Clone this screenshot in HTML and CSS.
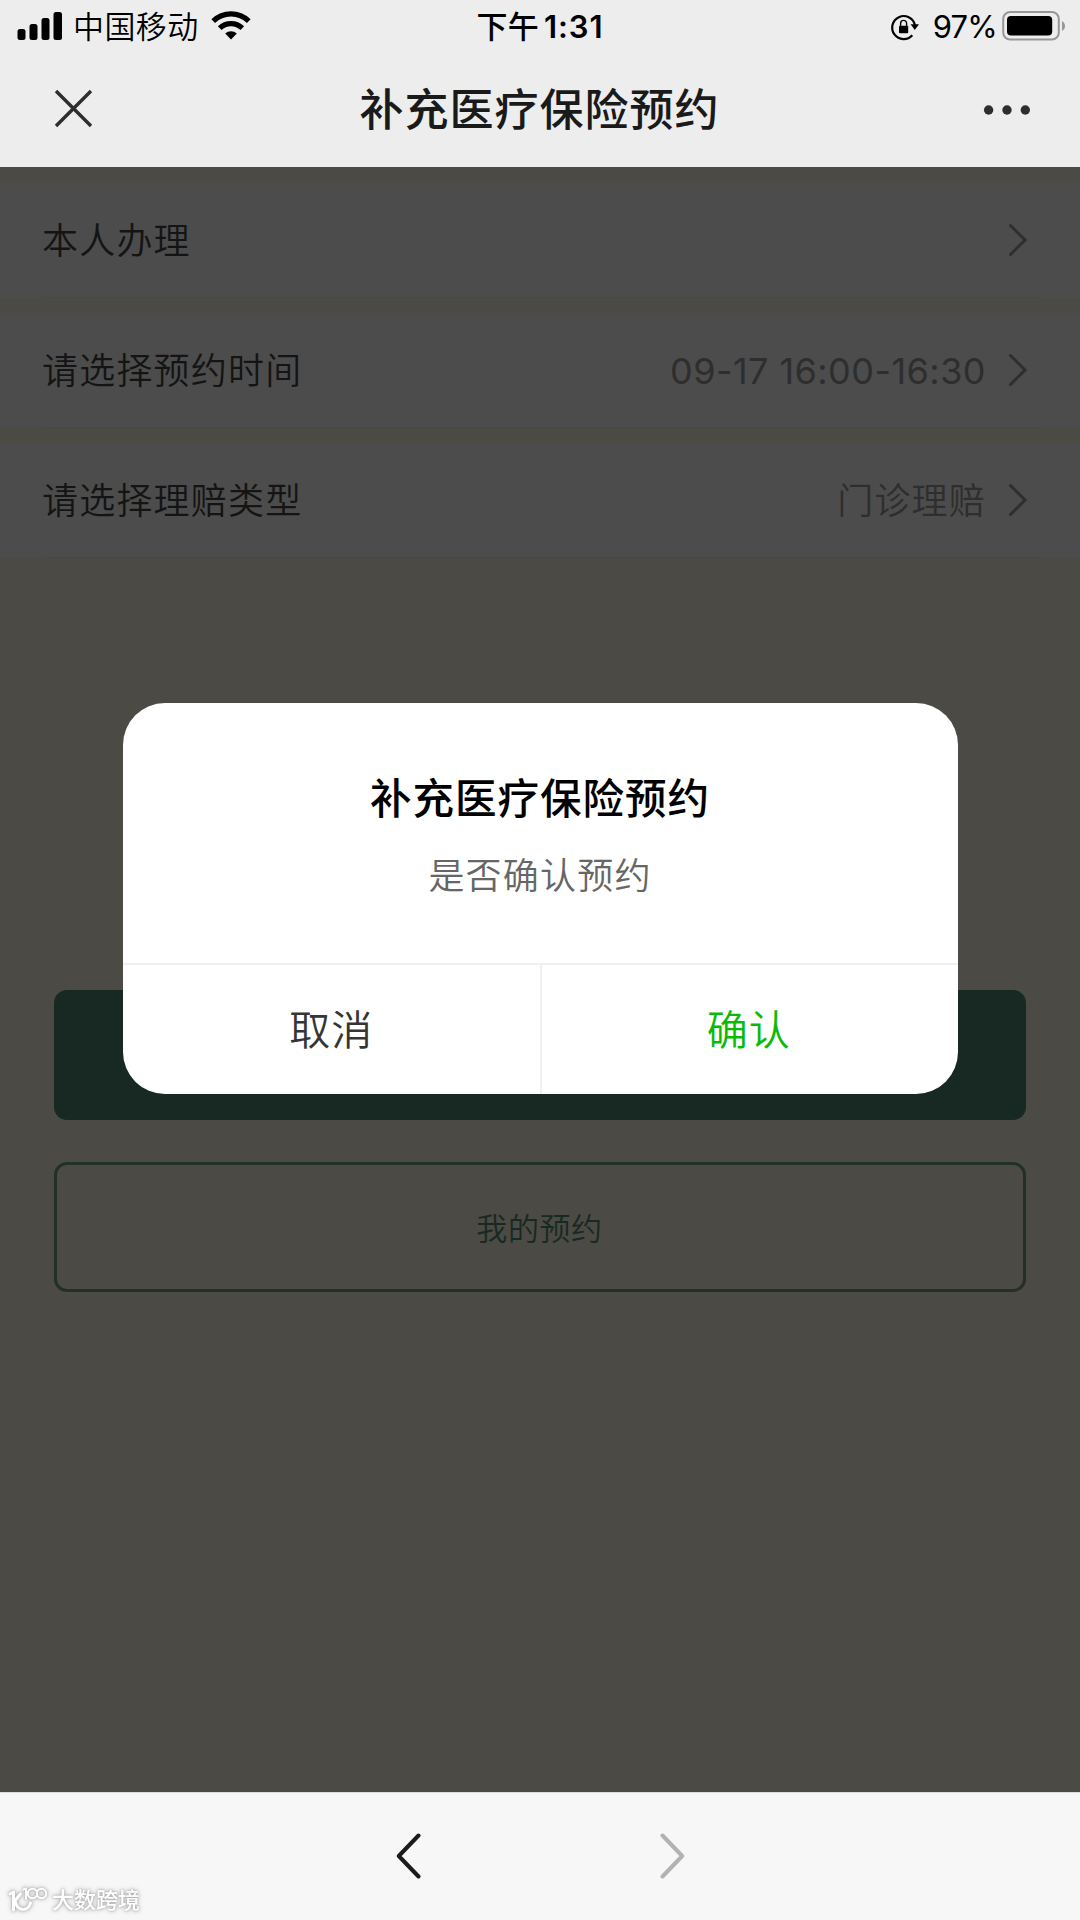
FILE: index.html
```html
<!DOCTYPE html>
<html lang="zh-CN">
<head>
<meta charset="utf-8">
<title>补充医疗保险预约</title>
<link rel="stylesheet" href="styles.css">
</head>
<body>
<div class="screen">
  <header class="top">
    <div class="status">
      <div class="status-left">
        <svg class="signal" width="46" height="30" viewBox="0 0 46 30">
          <rect x="0.5" y="18" width="8" height="11" rx="2.5"/>
          <rect x="12.5" y="13" width="8" height="16" rx="2.5"/>
          <rect x="24.5" y="7" width="8" height="22" rx="2.5"/>
          <rect x="36.5" y="1" width="8.5" height="28" rx="2.5"/>
        </svg>
        <span class="carrier">中国移动</span>
        <svg class="wifi" width="40" height="30" viewBox="0 0 40 30">
          <g fill="none" stroke="#000" stroke-width="5.2">
            <path d="M2.2 11.2A25.5 25.5 0 0 1 37.8 11.2"/>
            <path d="M8.7 18.2A16 16 0 0 1 31.3 18.2"/>
          </g>
          <path d="M20 29.5 L14.2 23.6 A8.3 8.3 0 0 1 25.8 23.6 Z"/>
        </svg>
      </div>
      <div class="clock"><span>下午</span><span class="clock-num">1:31</span></div>
      <div class="status-right">
        <svg class="lock" width="30" height="30" viewBox="0 0 30 30">
          <path d="M22.3 23.2A11.5 11.5 0 1 1 24.9 13" fill="none" stroke="#000" stroke-width="2.2"/>
          <path d="M20.6 12.2H29L24.8 18Z"/>
          <rect x="9" y="13.7" width="9.2" height="7.6" rx="1"/>
          <path d="M10.6 14.2V11.4A3 3 0 0 1 16.6 11.4V14.2" fill="none" stroke="#000" stroke-width="1.4"/>
        </svg>
        <span class="percent">97%</span>
        <svg class="battery" width="65" height="32" viewBox="0 0 65 32">
          <rect x="1.2" y="2" width="55.6" height="27.6" rx="7" fill="none" stroke="#979797" stroke-width="2"/>
          <rect x="5" y="6" width="45.2" height="19.6" rx="4"/>
          <path d="M60 11V21C62 20 63 18 63 16S62 12 60 11Z" fill="#979797"/>
        </svg>
      </div>
    </div>
    <nav class="nav">
      <svg class="close" width="40" height="40" viewBox="0 0 40 40"><path d="M2 2L37 37M37 2L2 37" stroke="#2e2e2e" stroke-width="3.4"/></svg>
      <h1 class="nav-title">补充医疗保险预约</h1>
      <svg class="more" width="48" height="12" viewBox="0 0 48 12" fill="#2e2e2e"><circle cx="5.6" cy="6" r="4.7"/><circle cx="24" cy="6" r="4.7"/><circle cx="42.3" cy="6" r="4.7"/></svg>
    </nav>
  </header>

  <main class="page">
    <section class="cell">
      <div class="cell-body">
        <span class="label">本人办理</span>
        <svg class="chevron" width="20" height="34" viewBox="0 0 20 34"><path d="M2.5 2.5L17 17L2.5 31.5"/></svg>
      </div>
    </section>
    <section class="cell">
      <div class="cell-body">
        <span class="label">请选择预约时间</span>
        <span class="value value-num">09-17 16:00-16:30</span>
        <svg class="chevron" width="20" height="34" viewBox="0 0 20 34"><path d="M2.5 2.5L17 17L2.5 31.5"/></svg>
      </div>
    </section>
    <section class="cell">
      <div class="cell-body">
        <span class="label">请选择理赔类型</span>
        <span class="value">门诊理赔</span>
        <svg class="chevron" width="20" height="34" viewBox="0 0 20 34"><path d="M2.5 2.5L17 17L2.5 31.5"/></svg>
      </div>
    </section>
    <div class="actions">
      <div class="btn btn-solid"></div>
      <div class="btn btn-outline">我的预约</div>
    </div>
    <div class="dialog">
      <div class="dialog-main">
        <h2 class="dialog-title">补充医疗保险预约</h2>
        <p class="dialog-text">是否确认预约</p>
      </div>
      <div class="dialog-foot">
        <div class="choice">取消</div>
        <div class="choice choice-ok">确认</div>
      </div>
    </div>
  </main>

  <footer class="toolbar">
    <svg width="26" height="46" viewBox="0 0 26 46"><path d="M22.5 2.5L2.8 23L22.5 43.5" stroke="#1b1b1b"/></svg>
    <svg width="26" height="46" viewBox="0 0 26 46"><path d="M3.5 2.5L23.2 23L3.5 43.5" stroke="#b2b2b2"/></svg>
    <div class="mark">
      <svg width="40" height="28" viewBox="0 0 40 28" fill="none" stroke="#fff" stroke-width="3">
        <path d="M2 8L5.5 6V24"/><path d="M12.500 8L7 14.500C9 26 20 26 22.500 17"/>
        <path d="M15.5 3.5L18 2.5V13" stroke-width="2"/><circle cx="24.5" cy="7.5" r="4.7" stroke-width="2"/><circle cx="33.5" cy="7.5" r="4.7" stroke-width="2"/>
      </svg>
      <span>大数跨境</span>
    </div>
  </footer>
</div>
</body>
</html>
```
FILE: styles.css
```css
* { box-sizing: border-box; }
body {
  margin: 0;
  font-family: Inter, "Noto Sans CJK SC", sans-serif;
  font-weight: 350;
  color: #000;
}
h1, h2, p { margin: 0; }
svg { display: block; flex: none; }
.screen {
  width: 1080px;
  height: 1920px;
  display: flex;
  flex-direction: column;
  overflow: hidden;
}
.top { height: 167px; background: #ededed; }
.status {
  height: 54px;
  padding: 0 13px 0 17px;
  display: grid;
  grid-template-columns: 1fr auto 1fr;
  align-items: center;
  font-size: 31px;
  line-height: 54px;
}
.status-left, .status-right, .clock { display: flex; align-items: center; }
.signal { margin-top: -2px; }
.carrier { margin-left: 10px; letter-spacing: 0.4px; }
.wifi { margin: -4px 0 0 12px; }
.clock { margin-right: 4px; font-weight: 500; gap: 5px; letter-spacing: 0.3px; }
.clock-num { font-weight: 600; letter-spacing: 0.9px; }
.status-right { justify-content: flex-end; }
.lock { margin-right: 13px; }
.percent { letter-spacing: -0.8px; font-weight: 400; }
.battery { margin-left: 5px; margin-top: -3px; }
.nav {
  height: 113px;
  padding: 0 49px 0 54px;
  display: grid;
  grid-template-columns: 48px 1fr 48px;
  align-items: center;
}
.close { margin-top: -3px; }
.more { margin-top: -2px; }
.nav-title {
  margin: -7px 6px 0 0;
  font-size: 44px;
  font-weight: 500;
  letter-spacing: 1px;
  text-align: center;
  color: #1a1a1a;
}
.page {
  position: relative;
  height: 1625px;
  padding-top: 16px;
  background: #4c4a45;
  display: flex;
  flex-direction: column;
  gap: 15px;
}
.cell { height: 115px; padding: 0 38px 0 42px; background: #4c4c4c; }
.cell-body {
  height: 115px;
  padding: 0 14px 0 0;
  border-bottom: 1px solid #484848;
  display: flex;
  align-items: center;
}
.label { flex: 1; margin-top: -4px; font-size: 36px; letter-spacing: 1.2px; color: #141414; }
.value { margin-top: -4px; font-size: 36px; letter-spacing: 1.2px; color: #2e2e2e; }
.value-num { margin-top: 1px; letter-spacing: 0.45px; font-weight: 400; }
.chevron { margin: 0 0 0 22px; fill: none; stroke: #2e2e2e; stroke-width: 3; stroke-linecap: round; }
.actions {
  margin-top: 417px;
  padding: 0 54px;
  display: flex;
  flex-direction: column;
  gap: 42px;
}
.btn {
  height: 130px;
  border-radius: 13px;
  display: flex;
  align-items: center;
  justify-content: center;
  font-size: 31px;
}
.btn-solid { background: #182923; }
.btn-outline { padding: 0 1px 2px 0; border: 3px solid #233029; color: #182923; letter-spacing: 0.6px; }
.dialog {
  position: absolute;
  left: 122.5px;
  top: 535.5px;
  width: 835px;
  height: 391px;
  border-radius: 42px;
  background: #fff;
  overflow: hidden;
  display: flex;
  flex-direction: column;
}
.dialog-main { height: 260px; padding-top: 66px; text-align: center; }
.dialog-title { font-size: 41.5px; line-height: 60px; font-weight: 500; letter-spacing: 1px; }
.dialog-text { margin-top: 21px; font-size: 36px; line-height: 52px; letter-spacing: 1.2px; color: #666; }
.dialog-foot { display: grid; grid-template-columns: 417.5px 1fr; height: 131px; border-top: 2px solid #f0f0f0; }
.choice {
  padding-bottom: 4px;
  display: flex;
  align-items: center;
  justify-content: center;
  font-size: 41px;
  letter-spacing: 1px;
  color: #353535;
}
.choice-ok { padding-right: 2px; border-left: 2px solid #f0f0f0; color: #09bb07; }
.toolbar {
  position: relative;
  height: 128px;
  padding-bottom: 2px;
  background: #f7f7f7;
  border-top: 1px solid #dcdcdc;
  display: flex;
  align-items: center;
  justify-content: center;
  gap: 237px;
  fill: none;
  stroke-width: 4;
  stroke-linecap: round;
  stroke-linejoin: round;
}
.mark {
  position: absolute;
  left: 8px;
  bottom: 6px;
  display: flex;
  align-items: center;
  gap: 4px;
  font-size: 22px;
  line-height: 28px;
  font-weight: 500;
  color: #fff;
  filter: drop-shadow(0 0 1px #aaa) drop-shadow(0 0 2px #bbb);
}
```
